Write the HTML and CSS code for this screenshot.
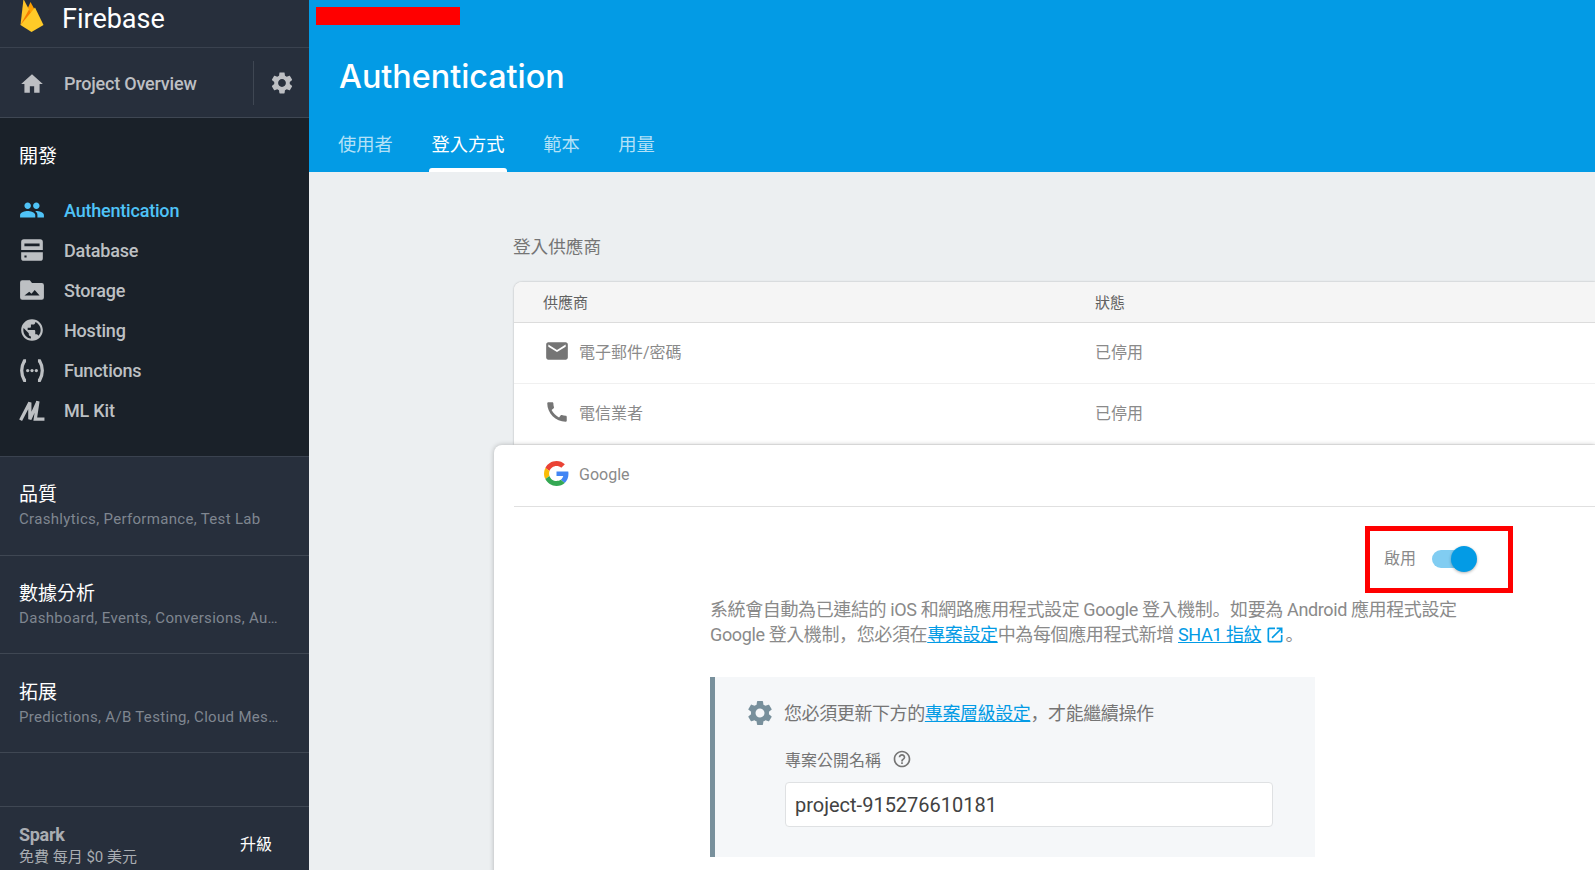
FILE: index.html
```html
<!DOCTYPE html>
<html lang="zh-Hant">
<head>
    <meta charset="UTF-8">
    <meta name="viewport" content="width=device-width, initial-scale=1.0">
    <title>Authentication - Firebase</title>
    <link rel="stylesheet" href="styles.css">
</head>
<body>
    <!-- Menu lateral -->
    <aside class="sidebar">
        <div class="brand">
            <svg class="brand-logo" viewBox="0 0 24 33">
                <path fill="#ffa000" d="M0.5 25 L10.500 2 L16.500 13 Z"/>
                <path fill="#f57c00" d="M0.5 25 L8 8 L11.500 14 Z"/>
                <path fill="#ffc429" d="M0.5 25 L3.500 -1 L9 9.500 Z"/>
                <path fill="#ffca28" d="M0.5 25 L15 7.500 L23.500 25 L11.500 32 Z"/>
            </svg>
            <span class="brand-name">Firebase</span>
        </div>
        <div class="overview">
            <svg class="icon" viewBox="0 0 24 24"><path d="M10 20v-6h4v6h5v-8h3L12 3 2 12h3v8z"/></svg>
            <span class="overview-name">Project Overview</span>
            <span class="overview-gear">
                <svg class="icon" viewBox="0 0 24 24"><path d="M19.14 12.94c.04-.3.06-.61.06-.94 0-.32-.02-.64-.07-.94l2.03-1.58c.18-.14.23-.41.12-.61l-1.92-3.32c-.12-.22-.37-.29-.59-.22l-2.39.96c-.5-.38-1.03-.7-1.62-.94l-.36-2.54c-.04-.24-.24-.41-.48-.41h-3.84c-.24 0-.43.17-.47.41l-.36 2.54c-.59.24-1.13.57-1.62.94l-2.39-.96c-.22-.08-.47 0-.59.22L2.74 8.87c-.12.21-.08.47.12.61l2.03 1.58c-.05.3-.09.63-.09.94s.02.64.07.94l-2.03 1.58c-.18.14-.23.41-.12.61l1.92 3.32c.12.22.37.29.59.22l2.39-.96c.5.38 1.03.7 1.62.94l.36 2.54c.05.24.24.41.48.41h3.84c.24 0 .44-.17.47-.41l.36-2.54c.59-.24 1.13-.56 1.62-.94l2.39.96c.22.08.47 0 .59-.22l1.92-3.32c.12-.22.07-.47-.12-.61l-2.01-1.58zM12 15.6c-1.98 0-3.6-1.62-3.6-3.6s1.62-3.6 3.6-3.6 3.6 1.62 3.6 3.6-1.62 3.6-3.6 3.6z"/></svg>
            </span>
        </div>
        <nav class="develop">
            <h2 class="section-title">開發</h2>
            <a class="nav-item active">
                <svg class="icon" viewBox="0 0 24 24"><path d="M16 11c1.66 0 2.99-1.34 2.99-3S17.66 5 16 5c-1.66 0-3 1.34-3 3s1.34 3 3 3zm-8 0c1.66 0 2.99-1.34 2.99-3S9.66 5 8 5C6.34 5 5 6.34 5 8s1.34 3 3 3zm0 2c-2.33 0-7 1.17-7 3.5V19h14v-2.5c0-2.33-4.67-3.5-7-3.5zm8 0c-.29 0-.62.02-.97.05 1.16.84 1.97 1.97 1.97 3.45V19h6v-2.5c0-2.33-4.67-3.5-7-3.5z"/></svg>
                Authentication
            </a>
            <a class="nav-item">
                <svg class="icon" viewBox="0 0 24 24"><path fill-rule="evenodd" d="M4.5 2h15A2.5 2.5 0 0 1 22 4.5V12H2V4.500A2.500 2.500 0 0 1 4.500 2zM5 6v2.500h14V6zM2 14h20v5.500a2.500 2.500 0 0 1-2.500 2.500h-15A2.500 2.500 0 0 1 2 19.500zM5 17v2h2v-2z"/></svg>
                Database
            </a>
            <a class="nav-item">
                <svg class="icon" viewBox="0 0 24 24"><path fill-rule="evenodd" d="M3 3h7l2 2.500h9a2 2 0 0 1 2 2V19a2 2 0 0 1-2 2H3a2 2 0 0 1-2-2V5a2 2 0 0 1 2-2zM5 17h14l-4.500-5-3 3.500-2-2z"/></svg>
                Storage
            </a>
            <a class="nav-item">
                <svg class="icon" viewBox="0 0 24 24"><path d="M12 2C6.480 2 2 6.480 2 12s4.480 10 10 10 10-4.480 10-10S17.520 2 12 2zm-1 17.930c-3.950-.490-7-3.850-7-7.930 0-.620.080-1.210.210-1.790L9 15v1c0 1.100.900 2 2 2v1.930zm6.900-2.540c-.260-.810-1-1.390-1.900-1.390h-1v-3c0-.550-.450-1-1-1H8v-2h2c.550 0 1-.450 1-1V7h2c1.100 0 2-.900 2-2v-.410c2.930 1.190 5 4.060 5 7.410 0 2.080-.800 3.970-2.100 5.390z"/></svg>
                Hosting
            </a>
            <a class="nav-item">
                <svg class="icon" viewBox="0 0 24 24"><path class="stroke" d="M6.500 3.500H5C3.500 6 2.500 9 2.500 12.500S3.500 19 5 21.500h1.500M17.500 3.500H19c1.500 2.500 2.500 5.500 2.500 9s-1 6.500-2.500 9h-1.500"/><circle cx="8" cy="12.500" r="1.500"/><circle cx="12" cy="12.500" r="1.500"/><circle cx="16" cy="12.500" r="1.500"/></svg>
                Functions
            </a>
            <a class="nav-item">
                <svg class="icon" viewBox="0 0 24 24"><path class="stroke" d="M1.500 21.500L10 5v15.500L17.500 4 15 20.500H23.500"/></svg>
                ML Kit
            </a>
        </nav>
        <div class="group">
            <h2 class="section-title">品質</h2>
            <p class="group-sub">Crashlytics, Performance, Test Lab</p>
        </div>
        <div class="group">
            <h2 class="section-title">數據分析</h2>
            <p class="group-sub">Dashboard, Events, Conversions, Audiences</p>
        </div>
        <div class="group">
            <h2 class="section-title">拓展</h2>
            <p class="group-sub">Predictions, A/B Testing, Cloud Messaging</p>
        </div>
        <div class="plan">
            <div>
                <div class="plan-name">Spark</div>
                <div class="plan-price">免費 每月 $0 美元</div>
            </div>
            <span class="plan-upgrade">升級</span>
        </div>
    </aside>

    <main class="main">
        <header class="topbar">
            <div class="redacted"></div>
            <h1 class="page-title">Authentication</h1>
            <div class="tabs">
                <a class="tab">使用者</a>
                <a class="tab active">登入方式</a>
                <a class="tab">範本</a>
                <a class="tab">用量</a>
            </div>
        </header>

        <section class="content">
            <h3 class="content-label">登入供應商</h3>
            <div class="table">
                <div class="table-head">
                    <span>供應商</span>
                    <span>狀態</span>
                </div>
                <div class="table-row">
                    <span class="provider">
                        <svg class="provider-icon" viewBox="0 0 24 24"><path d="M20 4H4c-1.100 0-1.990.900-1.990 2L2 18c0 1.100.900 2 2 2h16c1.100 0 2-.900 2-2V6c0-1.100-.900-2-2-2zm0 4l-8 5-8-5V6l8 5 8-5v2z"/></svg>
                        電子郵件/密碼
                    </span>
                    <span>已停用</span>
                </div>
                <div class="table-row">
                    <span class="provider">
                        <svg class="provider-icon" viewBox="0 0 24 24"><path d="M20.010 15.380c-1.230 0-2.420-.200-3.530-.560-.350-.120-.740-.030-1.010.240l-1.570 1.970c-2.830-1.350-5.480-3.900-6.890-6.830l1.950-1.660c.270-.280.350-.670.240-1.020-.370-1.110-.560-2.300-.560-3.530 0-.540-.450-.990-.990-.990H4.190C3.650 3 3 3.240 3 3.990 3 13.280 10.730 21 20.010 21c.710 0 .990-.630.990-1.180v-3.450c0-.540-.450-.990-.980-.990z"/></svg>
                        電信業者
                    </span>
                    <span>已停用</span>
                </div>
            </div>

            <!-- Painel aberto do Google -->
            <div class="panel">
                <div class="panel-head">
                    <span class="provider">
                        <svg class="provider-icon google" viewBox="0 0 48 48">
                            <path fill="#ea4335" d="M24 9.500c3.540 0 6.710 1.220 9.210 3.600l6.850-6.850C35.900 2.380 30.470 0 24 0 14.620 0 6.510 5.380 2.560 13.220l7.980 6.190C12.430 13.720 17.740 9.500 24 9.500z"/>
                            <path fill="#4285f4" d="M46.980 24.550c0-1.570-.150-3.090-.380-4.550H24v9.020h12.940c-.580 2.960-2.260 5.480-4.780 7.180l7.730 6c4.510-4.180 7.090-10.360 7.090-17.650z"/>
                            <path fill="#fbbc05" d="M10.530 28.590c-.480-1.450-.760-2.990-.760-4.590s.270-3.140.760-4.590l-7.980-6.190C.920 16.460 0 20.120 0 24c0 3.880.920 7.540 2.560 10.780l7.970-6.190z"/>
                            <path fill="#34a853" d="M24 48c6.480 0 11.930-2.130 15.890-5.810l-7.730-6c-2.150 1.450-4.920 2.300-8.160 2.300-6.260 0-11.570-4.220-13.470-9.910l-7.980 6.190C6.510 42.620 14.620 48 24 48z"/>
                        </svg>
                        Google
                    </span>
                </div>

                <div class="toggle-row">
                    <div class="toggle-box">
                        <span class="toggle-label">啟用</span>
                        <span class="switch"><span class="switch-thumb"></span></span>
                    </div>
                </div>

                <p class="panel-text">系統會自動為已連結的 iOS 和網路應用程式設定 Google 登入機制<span class="punct" lang="ja">。</span>如要為 Android 應用程式設定<br>Google 登入機制<span class="punct" lang="ja">，</span>您必須在<a class="link">專案設定</a>中為每個應用程式新增 <a class="link">SHA1 指紋</a>
                    <svg class="ext-icon" viewBox="0 0 24 24"><path d="M19 19H5V5h7V3H5c-1.110 0-2 .900-2 2v14c0 1.100.890 2 2 2h14c1.100 0 2-.900 2-2v-7h-2v7zM14 3v2h3.590l-9.830 9.830 1.410 1.410L19 6.410V10h2V3h-7z"/></svg><span class="punct" lang="ja">。</span></p>

                <div class="notice">
                    <div class="notice-title">
                        <svg class="notice-gear" viewBox="0 0 24 24"><path d="M19.140 12.940c.040-.300.060-.610.060-.940 0-.320-.020-.640-.070-.940l2.030-1.580c.180-.140.230-.410.120-.610l-1.920-3.320c-.120-.220-.370-.290-.590-.220l-2.390.960c-.500-.380-1.030-.700-1.620-.940l-.360-2.540c-.040-.240-.240-.410-.480-.410h-3.840c-.240 0-.430.170-.470.410l-.360 2.540c-.590.240-1.130.570-1.620.940l-2.390-.960c-.220-.080-.470 0-.590.220L2.740 8.870c-.120.210-.080.470.12.610l2.030 1.580c-.050.300-.090.630-.090.940s.020.640.07.940l-2.030 1.580c-.180.140-.230.410-.12.610l1.920 3.320c.120.220.370.290.590.220l2.390-.960c.500.380 1.030.700 1.620.940l.360 2.540c.050.240.240.410.480.410h3.840c.240 0 .440-.170.470-.410l.360-2.540c.590-.240 1.130-.560 1.620-.940l2.390.960c.220.080.470 0 .590-.220l1.920-3.320c.120-.220.070-.470-.120-.610l-2.010-1.580zM12 15.600c-1.980 0-3.600-1.620-3.600-3.600s1.620-3.600 3.600-3.600 3.600 1.620 3.600 3.600-1.620 3.600-3.600 3.600z"/></svg>
                        <span class="notice-text">您必須更新下方的<a class="link">專案層級設定</a><span class="punct" lang="ja">，</span>才能繼續操作</span>
                    </div>
                    <div class="field">
                        <label class="field-label">專案公開名稱
                            <svg class="help-icon" viewBox="0 0 24 24"><path d="M11 18h2v-2h-2v2zm1-16C6.480 2 2 6.480 2 12s4.480 10 10 10 10-4.480 10-10S17.520 2 12 2zm0 18c-4.410 0-8-3.590-8-8s3.590-8 8-8 8 3.590 8 8-3.590 8-8 8zm0-14c-2.210 0-4 1.790-4 4h2c0-1.100.900-2 2-2s2 .900 2 2c0 2-3 1.750-3 5h2c0-2.250 3-2.500 3-5 0-2.210-1.790-4-4-4z"/></svg>
                        </label>
                        <input class="field-input" type="text" value="project-915276610181">
                    </div>
                </div>
            </div>
        </section>
    </main>
</body>
</html>
```

FILE: styles.css
```css
* {
    margin: 0;
    padding: 0;
    box-sizing: border-box;
}

html, body {
    height: 870px;
    overflow: hidden;
}

body {
    display: flex;
    font-family: Roboto, "Noto Sans CJK TC", sans-serif;
    background: #eceff1;
}

.punct {
    font-family: "Noto Sans CJK JP", sans-serif;
    line-height: 0;
}

/* Sidebar */
.sidebar {
    width: 309px;
    height: 870px;
    flex-shrink: 0;
    background: #272f3c;
    display: flex;
    flex-direction: column;
    overflow: hidden;
}

.brand {
    height: 48px;
    display: flex;
    align-items: flex-start;
    padding-left: 20px;
    border-bottom: 1px solid #3a424f;
}

.brand-logo {
    width: 24px;
    height: 33px;
}

.brand-name {
    margin-left: 18px;
    font-size: 27px;
    line-height: 39px;
    color: #fff;
}

.overview {
    height: 70px;
    display: flex;
    align-items: center;
    padding: 2px 0 0 19px;
    border-bottom: 1px solid #3f4753;
    color: #bdbfc3;
}

.icon {
    width: 26px;
    height: 26px;
    flex-shrink: 0;
    fill: currentColor;
}

.icon .stroke {
    fill: none;
    stroke: currentColor;
    stroke-width: 3;
}

.overview-name {
    margin-left: 19px;
    font-size: 18px;
    font-weight: 500;
    letter-spacing: -0.2px;
}

.overview-gear {
    margin-left: auto;
    width: 56px;
    height: 44px;
    display: flex;
    align-items: center;
    padding-left: 15px;
    border-left: 1px solid #3f4753;
    position: relative;
    top: -1px;
}

.develop {
    height: 339px;
    flex-shrink: 0;
    background: #1a2129;
    padding-top: 24px;
    border-bottom: 1px solid #3a424f;
}

.section-title {
    padding-left: 19px;
    font-size: 19px;
    line-height: 30px;
    font-weight: 400;
    color: #fff;
}

.nav-item {
    height: 40px;
    display: flex;
    align-items: center;
    gap: 19px;
    padding-left: 19px;
    font-size: 18px;
    font-weight: 500;
    letter-spacing: -0.2px;
    color: #bdc0c3;
}

.develop .section-title {
    margin-bottom: 18px;
}

.nav-item.active {
    color: #4fc3f7;
}

.group {
    height: 98.670px;
    flex-shrink: 0;
    padding-top: 23.400px;
    border-bottom: 1px solid #3f4753;
}

.group-sub {
    padding: 0 30px 0 19px;
    font-size: 15px;
    line-height: 19px;
    color: #7f8690;
    letter-spacing: 0.32px;
    white-space: nowrap;
    overflow: hidden;
    text-overflow: ellipsis;
}

.plan {
    margin-top: 53px;
    flex: 1;
    display: flex;
    align-items: center;
    justify-content: space-between;
    padding: 15px 37px 2px 19px;
    border-top: 1px solid #3f4753;
}

.plan-name {
    font-size: 18px;
    line-height: 25px;
    font-weight: 700;
    letter-spacing: -0.3px;
    color: #a9adb2;
}

.plan-price {
    font-size: 15px;
    line-height: 21px;
    color: #a9adb2;
}

.plan-upgrade {
    margin-bottom: 3px;
    font-size: 16px;
    color: #fff;
}

/* Main */
.main {
    flex: 1;
    min-width: 0;
    height: 870px;
    overflow: hidden;
}

.topbar {
    height: 172px;
    background: #039be5;
    padding-top: 7px;
    color: #fff;
}

.redacted {
    width: 144px;
    height: 18px;
    margin-left: 7px;
    background: #f00;
}

.page-title {
    margin: 32px 0 0 30px;
    font-family: Inter, sans-serif;
    font-size: 32.300px;
    line-height: 40px;
    font-weight: 500;
}

.tabs {
    display: flex;
    gap: 32.600px;
    margin: 26px 0 0 26px;
}

.tab {
    height: 49px;
    padding: 8px 3px 0;
    font-size: 18.300px;
    line-height: 28px;
    color: #b3e1f7;
    position: relative;
}

.tab.active {
    color: #fff;
}

.tab.active::after {
    content: "";
    position: absolute;
    left: 1px;
    right: 1px;
    bottom: 0;
    height: 4px;
    background: #fff;
    border-radius: 3px 3px 0 0;
}

.content {
    padding-left: 205px;
}

.content-label {
    margin: 60px 0 0 -1px;
    height: 30px;
    font-size: 17.600px;
    line-height: 30px;
    font-weight: 400;
    color: #757575;
}

.table {
    margin-top: 20px;
    background: #fff;
    border-radius: 8px 0 0 0;
    box-shadow: 0 0 2px rgba(0, 0, 0, 0.3);
}

.table-head {
    height: 41px;
    display: grid;
    grid-template-columns: 552px 1fr;
    align-items: center;
    padding: 0 0 2px 29px;
    background: #f5f5f5;
    border-radius: 8px 0 0 0;
    border-bottom: 1px solid #dcdcdc;
    font-size: 15px;
    color: #616161;
}

.table-row {
    height: 61px;
    display: grid;
    grid-template-columns: 551px 1fr;
    align-items: center;
    padding: 0 0 4px 30px;
    border-bottom: 1px solid #f0f0f0;
    font-size: 16px;
    color: #8a8a8a;
}

.provider {
    display: flex;
    align-items: center;
    gap: 9px;
    font-size: 16px;
    color: #8a8a8a;
}

.provider-icon {
    width: 26px;
    height: 26px;
    fill: #757575;
}

.provider-icon.google {
    width: 25px;
    height: 25px;
    margin-right: 1px;
    position: relative;
    top: -1px;
}

.panel {
    margin-left: -20px;
    background: #fff;
    border-radius: 8px 0 0 0;
    box-shadow: 0 0 5px rgba(0, 0, 0, 0.25);
    position: relative;
    padding-bottom: 40px;
}

.panel-head {
    height: 62px;
    margin-left: 20px;
    padding: 0 0 2px 30px;
    display: flex;
    align-items: center;
    border-bottom: 1px solid #e0e0e0;
}

.toggle-row {
    display: flex;
    justify-content: flex-end;
    padding: 19px 82px 0 0;
}

.toggle-box {
    width: 148px;
    height: 67px;
    border: 5px solid #f00;
    display: flex;
    align-items: center;
    padding: 0 0 2px 14px;
    gap: 16px;
    font-size: 16px;
    color: #8a8a8a;
}

.toggle-label {
    margin-bottom: 3px;
}

.switch {
    width: 38px;
    height: 18px;
    border-radius: 9px;
    background: #81cdf2;
    position: relative;
}

.switch-thumb {
    position: absolute;
    right: -7px;
    top: -4px;
    width: 26px;
    height: 26px;
    border-radius: 50%;
    background: #039be5;
    box-shadow: 0 1px 3px rgba(0, 0, 0, 0.3);
}

.panel-text {
    margin: 4px 0 0 216px;
    font-size: 18px;
    line-height: 25px;
    letter-spacing: -0.38px;
    color: #8a8a8a;
    white-space: nowrap;
}

.link {
    color: #039be5;
    text-decoration: underline;
}

.ext-icon {
    width: 20px;
    height: 20px;
    vertical-align: -4px;
    fill: #039be5;
}

.notice {
    width: 605px;
    height: 180px;
    margin: 30px 0 0 216px;
    padding: 20px 0 0 30px;
    background: #f5f7f9;
    border-left: 5px solid #78909c;
}

.notice-title {
    display: flex;
    align-items: center;
    gap: 9px;
    font-size: 18px;
    line-height: 30px;
    letter-spacing: -0.4px;
    color: #757575;
}

.notice-text {
    padding-top: 2px;
}

.notice-gear {
    width: 30px;
    height: 30px;
    fill: #78909c;
}

.field {
    margin: 18px 0 0 40px;
}

.field-label {
    display: flex;
    align-items: center;
    gap: 11px;
    height: 24px;
    font-size: 16px;
    color: #757575;
}

.help-icon {
    width: 20px;
    height: 20px;
    fill: #757575;
}

.field-input {
    display: block;
    width: 488px;
    height: 45px;
    margin-top: 11px;
    padding: 0 9px;
    border: 1px solid #dfe1e3;
    border-radius: 4px;
    background: #fff;
    font-family: Roboto, sans-serif;
    font-size: 20px;
    color: #424242;
}
```
